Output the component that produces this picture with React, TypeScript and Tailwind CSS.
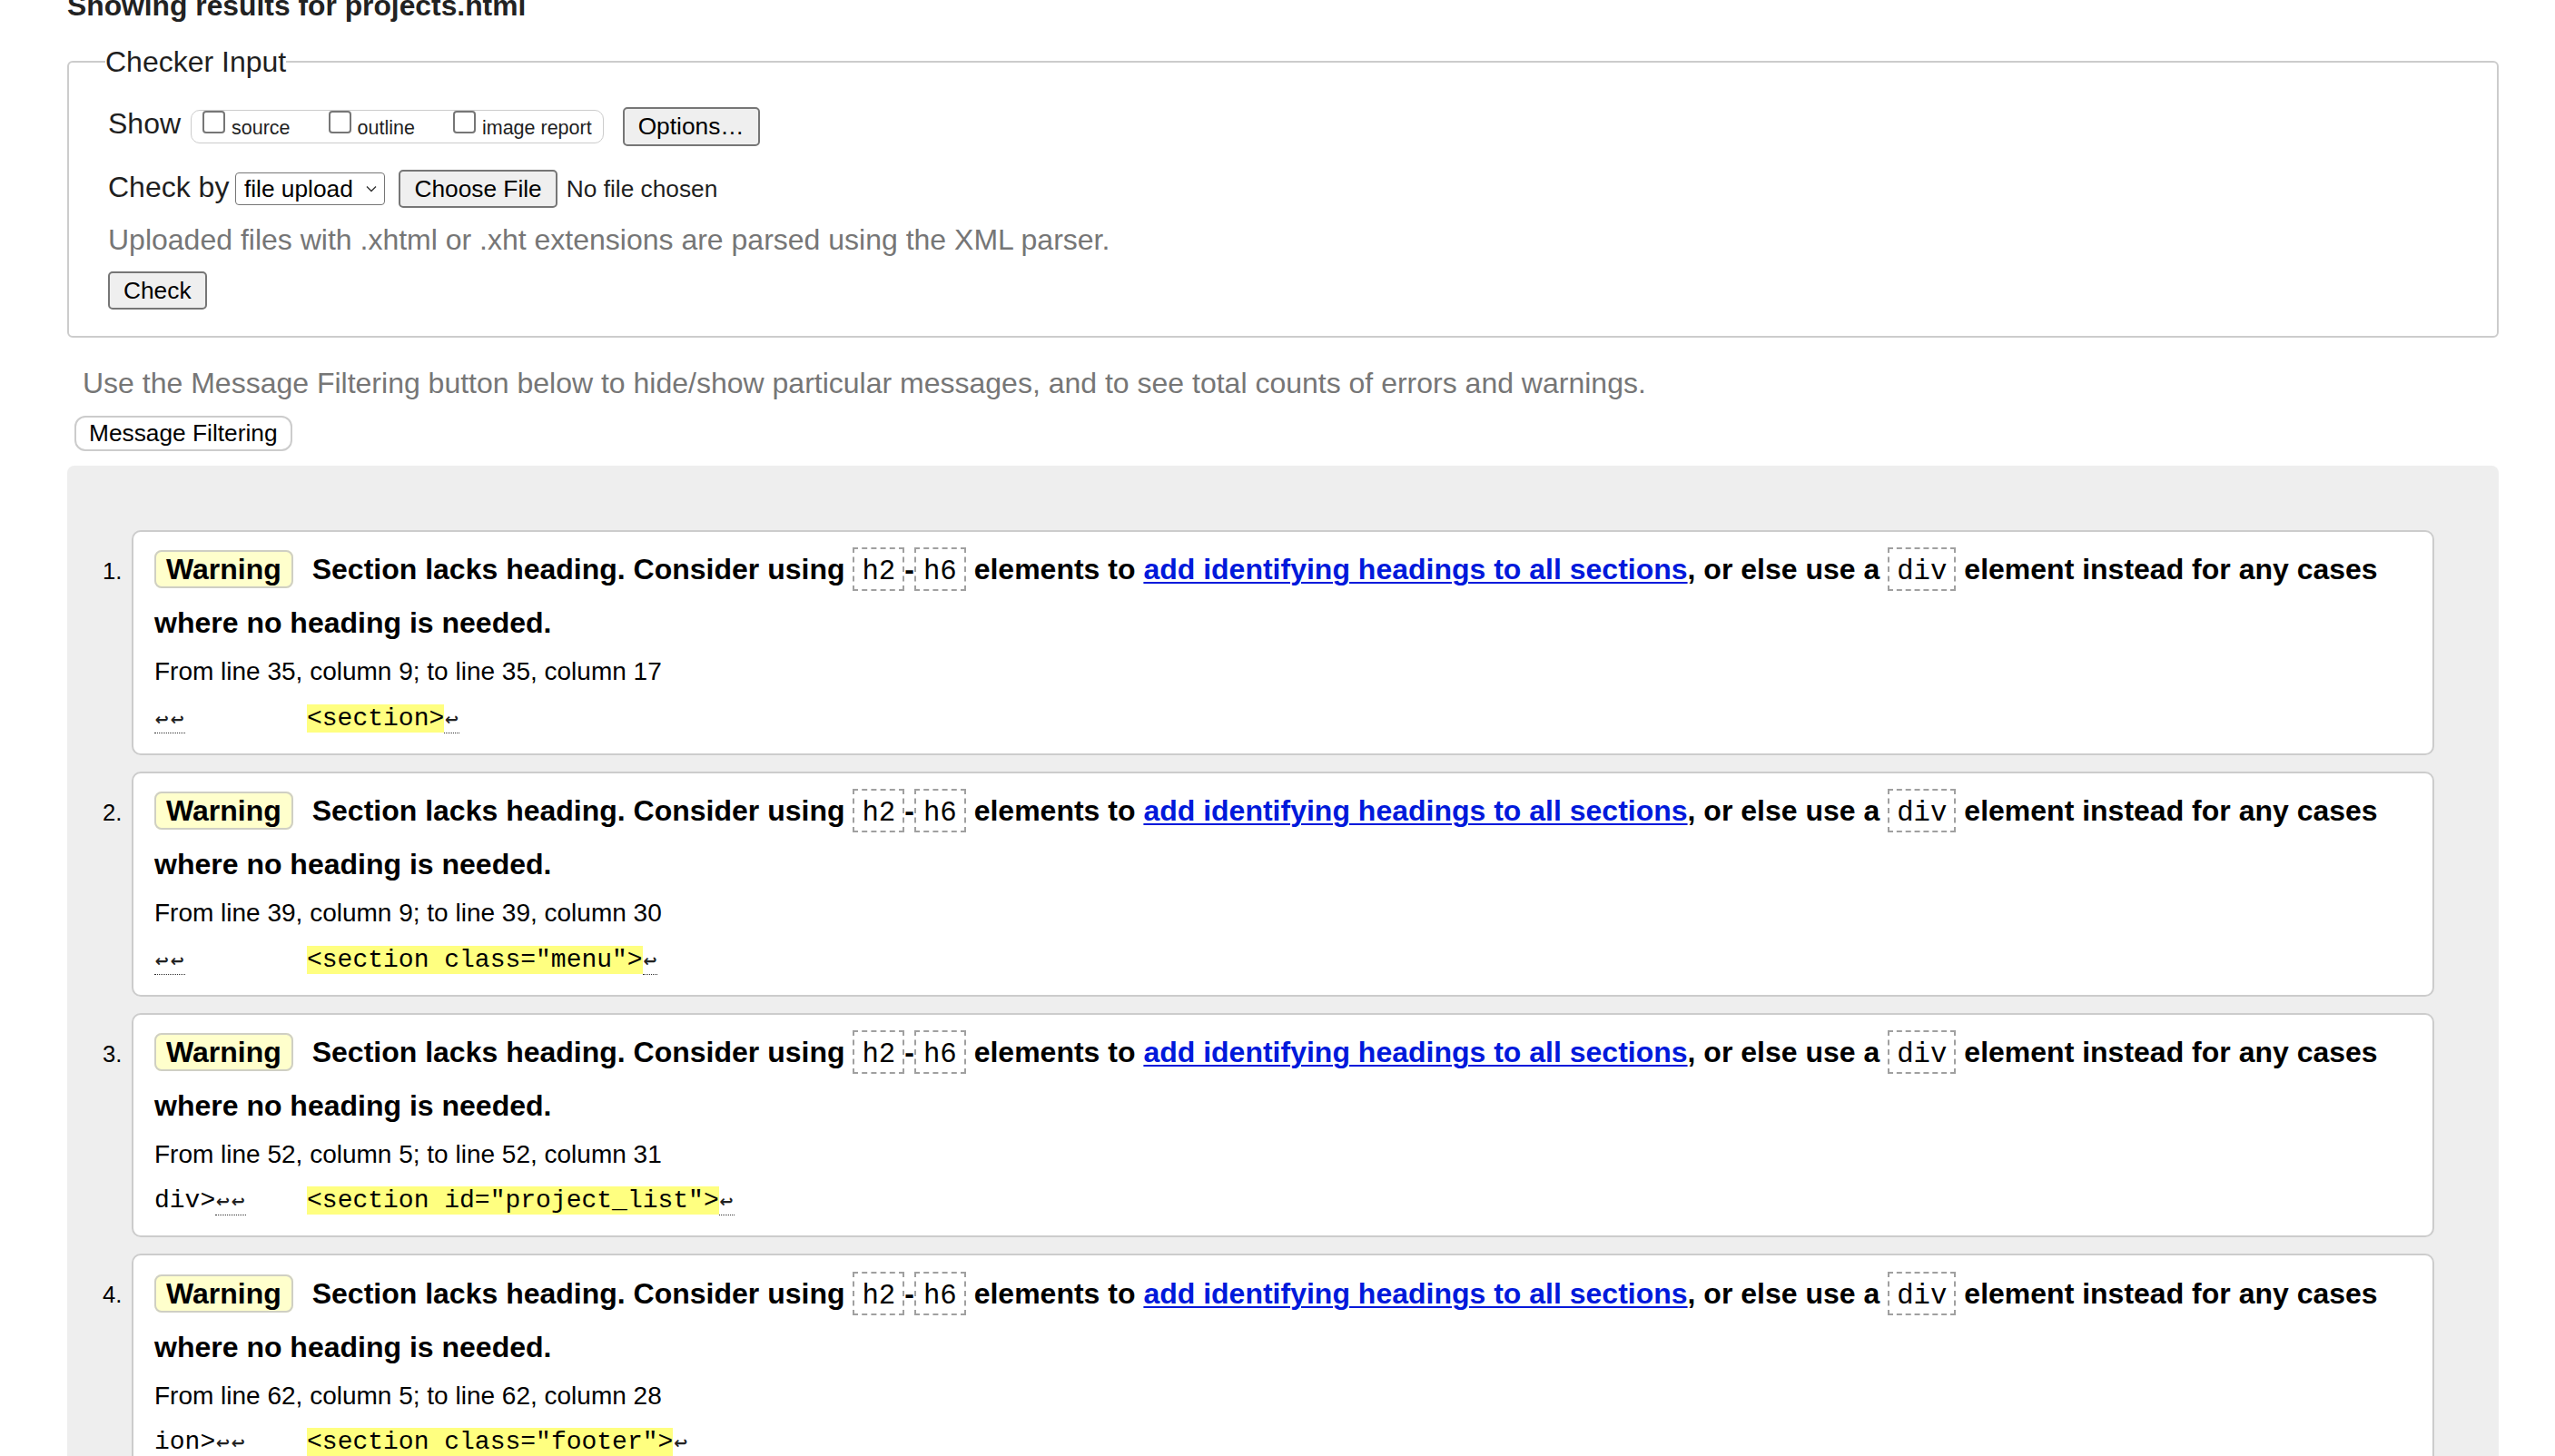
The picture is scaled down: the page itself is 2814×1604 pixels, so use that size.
import React from "react";

interface Message {
  from: string;
  lead: string;
  gap: string;
  code: string;
}

const messages: Message[] = [
  { from: "From line 35, column 9; to line 35, column 17", lead: "", gap: "        ", code: "<section>" },
  { from: "From line 39, column 9; to line 39, column 30", lead: "", gap: "        ", code: '<section class="menu">' },
  { from: "From line 52, column 5; to line 52, column 31", lead: "div>", gap: "    ", code: '<section id="project_list">' },
  { from: "From line 62, column 5; to line 62, column 28", lead: "ion>", gap: "    ", code: '<section class="footer">' },
];

// newline markers shown in the source extract
const Breaks: React.FC<{ count: number }> = ({ count }) => (
  <span className="border-b border-dotted border-[#333]">
    {Array.from({ length: count }).map((_, i) => (
      <span key={i} className="inline-block w-[16.8px] text-center font-['DejaVu_Sans',sans-serif] text-[18px] font-bold leading-none text-[#222]">
        ↩
      </span>
    ))}
  </span>
);

const Code: React.FC<{ children: React.ReactNode }> = ({ children }) => (
  <code className="border-2 border-dashed border-[#a0a0a0] px-[8px] pb-[2px] pt-[7px] font-['Liberation_Mono','DejaVu_Sans_Mono',monospace] text-[30.72px] font-normal leading-none">
    {children}
  </code>
);

const Checkbox: React.FC<{ label: string; first?: boolean }> = ({ label, first }) => (
  <label className={first ? "flex items-start" : "ml-[42px] flex items-start"}>
    <span className="block h-[25px] w-[25px] rounded-[4px] border-2 border-[#767676] bg-white" />
    <span className="ml-[7px] pt-[5px] text-[21.5px] leading-[28px]">{label}</span>
  </label>
);

const MessageCard: React.FC<{ index: number; msg: Message }> = ({ index, msg }) => (
  <li className="flex">
    <span className="w-[32px] shrink-0 pt-[31px] text-[25.6px] leading-[29.44px] text-black">{index}.</span>
    <div className="min-w-0 flex-1 rounded-[10px] border-2 border-[#cccccc] bg-white pb-[22px] pl-[23px] pr-[23px] pt-[12.4px] text-black">
      <p className="text-[32px] font-bold leading-[59px]">
        <span className="mr-[12px] rounded-[8px] border-2 border-[#cfcfc4] bg-[#ffffcc] px-[11px] py-[1px] leading-none">Warning</span>{" "}
        Section lacks heading. Consider using <Code>h2</Code>-<Code>h6</Code> elements to{" "}
        <a href="#" className="text-[#0019db] underline decoration-2 underline-offset-[3px]">
          add identifying headings to all sections
        </a>
        , or else use a <Code>div</Code> element instead for any cases where no heading is needed.
      </p>
      <p className="mt-[7.8px] text-[28px] leading-[32.2px]">{msg.from}</p>
      <p className="mt-[19.4px] whitespace-pre font-['Liberation_Mono','DejaVu_Sans_Mono',monospace] text-[28px] leading-[32px]">
        {msg.lead}
        <Breaks count={2} />
        {msg.gap}
        <mark className="bg-[#ffff80] text-black">{msg.code}</mark>
        <Breaks count={1} />
      </p>
    </div>
  </li>
);

const App: React.FC = () => {
  return (
    <div className="min-h-screen bg-white pl-[74px] pr-[62px] font-['Liberation_Sans',Arial,sans-serif] text-[#1f1f1f]">
      <h2 className="text-[31.8px] font-bold leading-[12px] text-[#222]">Showing results for projects.html</h2>

      <fieldset className="mt-[38px] rounded-[6px] border-2 border-[#cccccc] pb-[29px] pl-[43px]">
        <legend className="-ml-[3px] text-[32px] leading-[36px]">Checker Input</legend>

        <div className="mt-[32px] flex items-start">
          <span className="text-[32px] leading-[36px]">Show</span>
          <div className="ml-[11px] mt-[3px] flex h-[37px] items-start rounded-[10px] border-[1.5px] border-[#cccccc] pl-[12px] pr-[12px]">
            <Checkbox label="source" first />
            <Checkbox label="outline" />
            <Checkbox label="image report" />
          </div>
          <button className="ml-[21px] h-[43px] rounded-[5px] border-2 border-[#767676] bg-[#efefef] px-[15px] text-[26.3px] leading-[29px] text-black">
            Options…
          </button>
        </div>

        <div className="mt-[26px] flex items-start">
          <span className="text-[32px] leading-[38px]">Check by</span>
          <div className="ml-[7px] mt-[3px] flex h-[36px] w-[165px] items-center rounded-[4px] border-[1.5px] border-[#767676] bg-white pl-[8.5px] text-[26.3px] leading-[29px] text-black">
            <span>file upload</span>
            <svg className="ml-auto mr-[8px]" width="12" height="8" viewBox="0 0 12 8" fill="none">
              <path d="M1 1.5 6 6.5 11 1.5" stroke="#333" strokeWidth="1.4" />
            </svg>
          </div>
          <button className="ml-[15px] h-[42px] rounded-[5px] border-2 border-[#767676] bg-[#efefef] px-[15px] text-[26.3px] leading-[29px] text-black">
            Choose File
          </button>
          <span className="ml-[10px] text-[26.3px] leading-[42px]">No file chosen</span>
        </div>

        <p className="mt-[17px] text-[32px] leading-[36px] text-[#767676]">
          Uploaded files with .xhtml or .xht extensions are parsed using the XML parser.
        </p>

        <button className="mt-[17px] block h-[42px] rounded-[5px] border-2 border-[#767676] bg-[#efefef] px-[15px] text-[26.3px] leading-[29px] text-black">
          Check
        </button>
      </fieldset>

      <p className="mt-[32px] pl-[17px] text-[32px] leading-[36px] text-[#767676]">
        Use the Message Filtering button below to hide/show particular messages, and to see total counts of errors and warnings.
      </p>

      <button className="ml-[8px] mt-[18px] block h-[39px] rounded-[12px] border-2 border-[#cccccc] bg-white px-[14px] text-[26.3px] leading-[29px] text-black">
        Message Filtering
      </button>

      <div className="mt-[16px] rounded-t-[8px] bg-[#eeeeee] pb-[40px] pl-[39px] pr-[71px] pt-[71px]">
        <ol className="flex flex-col gap-[18px]">
          {messages.map((m, i) => (
            <MessageCard key={i} index={i + 1} msg={m} />
          ))}
        </ol>
      </div>
    </div>
  );
};

export default App;
